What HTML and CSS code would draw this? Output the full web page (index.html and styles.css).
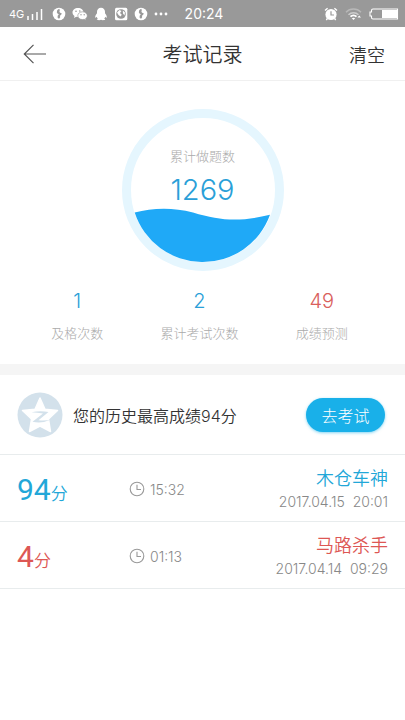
FILE: index.html
```
<!DOCTYPE html>
<html lang="zh-CN">
<head>
<meta charset="utf-8">
<meta name="viewport" content="width=device-width, initial-scale=1">
<title>考试记录</title>
<link rel="stylesheet" href="styles.css">
</head>
<body>
<svg class="defs" aria-hidden="true">
  <symbol id="globe" viewBox="0 0 14 14">
    <circle cx="7" cy="7" r="6.3" fill="#fff"/>
    <path d="M7.200 1.800Q4.600 2.600 4.800 5.200Q5.200 6.600 6.800 7.200Q5.200 8.600 5.600 10.400Q6 11.800 7.400 11.400Q8.600 10.600 8 8.800Q9.800 7.800 9.800 6Q9.200 6.400 8.200 5.800Q7 5.200 7.600 4Q8.200 3 7.200 1.800Z" fill="#999"/>
  </symbol>
  <symbol id="clock" viewBox="0 0 16 16">
    <circle cx="8" cy="8" r="6.8" fill="none" stroke="#999" stroke-width="1.1"/>
    <path d="M8 3.8V8.5H12" fill="none" stroke="#999" stroke-width="1.1"/>
  </symbol>
</svg>

<div class="status">
  <div class="status-left">
    <span class="network">4G</span>
    <svg class="signal" width="16" height="12" viewBox="0 0 16 12"><path d="M1 8v4M5.500 6v6M10 4v8M14.500 1v11" stroke="#fff" stroke-width="1.500"/></svg>
    <svg width="14" height="14"><use href="#globe"/></svg>
    <svg width="16" height="14" viewBox="0 0 16 14">
      <path d="M6 1C2.800 1 .5 3 .5 5.500c0 1.500.8 2.700 2 3.500L2 11l2.200-1.200c.6.2 1.200.2 1.800.2C9.200 10 11.500 8 11.500 5.500S9.200 1 6 1Z" fill="#fff"/>
      <path d="M10.500 4.800C7.800 4.800 5.800 6.600 5.800 8.700s2 3.900 4.700 3.900c.6 0 1.200-.1 1.700-.3l1.900 1-.5-1.700c1-.7 1.700-1.700 1.700-2.900 0-2.100-2.100-3.900-4.800-3.900Z" fill="#fff" stroke="#999" stroke-width=".7"/>
      <g fill="#999"><circle cx="4" cy="4.200" r=".8"/><circle cx="7.800" cy="4" r=".8"/><circle cx="9" cy="7.700" r=".7"/><circle cx="12.200" cy="7.700" r=".7"/></g>
    </svg>
    <svg width="14" height="14" viewBox="0 0 14 14"><path d="M7 .7c-2.500 0-4 1.800-4 4.100v1.500C2 7.500 1 9 1.200 10.800c.6 0 1-.5 1.500-1 .2.800.6 1.400 1.100 1.900-.6.200-1 .5-1 .9 0 .7 3.400.9 4.200.2.800.7 4.200.5 4.200-.2 0-.4-.4-.7-1-.9.500-.5.9-1.100 1.100-1.900.5.500.9 1 1.500 1C13 9 12 7.500 11 6.300V4.800C11 2.500 9.500.7 7 .7Z" fill="#fff"/></svg>
    <svg width="14" height="14" viewBox="0 0 14 14"><rect x="1" y=".7" width="12.300" height="12.600" rx="1.500" fill="#fff"/><circle cx="7" cy="7" r="4.800" fill="#999"/><path d="M3 5.500 5.500 3 7.500 4 6 6 7.800 7.800 6.500 9.500 4.500 8ZM8.800 3.500 11 5.500 10.500 8.500 9 6.500Z" fill="#fff"/></svg>
    <svg width="14" height="14"><use href="#globe"/></svg>
    <svg width="14" height="14" viewBox="0 0 14 14"><g fill="#fff"><circle cx="2" cy="7" r="1.400"/><circle cx="7" cy="7" r="1.400"/><circle cx="12" cy="7" r="1.400"/></g></svg>
  </div>
  <time class="status-time">20:24</time>
  <div class="status-right">
    <svg width="14" height="14" viewBox="0 0 14 14"><circle cx="7" cy="7.500" r="5.600" fill="#fff"/><path d="M1 3.600 3.600 1.300M10.400 1.300 13 3.600M3.400 11.500 2.300 13M10.600 11.500 11.700 13" stroke="#fff" stroke-width="1.400"/><path d="M7 4.300V8H10" fill="none" stroke="#999" stroke-width="1.200"/></svg>
    <svg width="17" height="14" viewBox="0 0 17 14"><g fill="none"><path d="M1 5.200C5 .9 12 .9 16 5.200" stroke="#b8b8b8" stroke-width="1.400"/><path d="M3.500 7.800C6.300 4.900 10.700 4.900 13.500 7.800" stroke="#ccc" stroke-width="1.500"/><path d="M5.500 9.700C7.200 8 9.800 8 11.500 9.700" stroke="#fff" stroke-width="1.800"/></g><path d="M6.800 11.200 8.500 12.900 10.200 11.200Q8.500 10.200 6.800 11.200ZM12.500 10.500 14.200 8.500 16 10.500Z" fill="#fff"/></svg>
    <svg width="30" height="12" viewBox="0 0 30 12"><path d="M4 1H28.500V11H4Q2.500 11 2.500 9.500V8H1V4H2.500V2.500Q2.500 1 4 1Z" fill="none" stroke="#fff" stroke-width="1.100"/><path d="M13 2H28V10H13Z" fill="#fff"/></svg>
  </div>
</div>

<header class="bar">
  <button class="back" type="button" aria-label="返回"><svg width="24" height="20" viewBox="0 0 24 20"><path d="M23 10H1.500M10.500.8 1.300 10 10.500 19.200" fill="none" stroke="#555" stroke-width="1.200"/></svg></button>
  <h1>考试记录</h1>
  <button class="clear" type="button">清空</button>
</header>

<main>
  <section class="summary">
    <div class="gauge">
      <svg width="162" height="162" viewBox="0 0 162 162" aria-hidden="true">
        <circle cx="81" cy="81" r="76.500" fill="none" stroke="#e5f6fe" stroke-width="9"/>
        <path d="M12.700 103.500C30 99 50 98 71 103.500C99 112 118 113 148 105.800A71.500 71.500 0 0 1 12.700 103.500Z" fill="#1fa9f7"/>
      </svg>
      <div class="gauge-text">
        <span class="caption">累计做题数</span>
        <span class="total">1269</span>
      </div>
    </div>
    <dl class="stats">
      <div><dt>及格次数</dt><dd>1</dd></div>
      <div><dt>累计考试次数</dt><dd>2</dd></div>
      <div class="red"><dt>成绩预测</dt><dd>49</dd></div>
    </dl>
  </section>

  <section class="best">
    <svg width="46" height="46" viewBox="0 0 46 46" aria-hidden="true">
      <circle cx="23" cy="23" r="22.500" fill="#d3e1eb"/>
      <path d="M23 6 28 17.300 40.500 18.500 31.500 27 33.500 39.500 23 34 12.500 39.500 14.500 27 5.500 18.500 18 17.300Z" fill="#fff" stroke="#fff" stroke-width="1.500" stroke-linejoin="round"/>
      <path d="M14.500 20.300Q23 18.300 31.500 20L21.500 28.200Q28 29.200 34.500 27.300Q25 32 15.500 29.700L26 21.500Q20 20.500 14.500 20.300Z" fill="#d3e1eb"/>
    </svg>
    <p>您的历史最高成绩94分</p>
    <button class="go" type="button">去考试</button>
  </section>

  <ul class="records">
    <li>
      <div class="score"><strong>94</strong>分</div>
      <div class="spent"><svg width="16" height="16"><use href="#clock"/></svg><span>15:32</span></div>
      <div class="result"><b>木仓车神</b><time>2017.04.15&nbsp; 20:01</time></div>
    </li>
    <li class="red">
      <div class="score"><strong>4</strong>分</div>
      <div class="spent"><svg width="16" height="16"><use href="#clock"/></svg><span>01:13</span></div>
      <div class="result"><b>马路杀手</b><time>2017.04.14&nbsp; 09:29</time></div>
    </li>
  </ul>
</main>
</body>
</html>
```
FILE: styles.css
```
* { box-sizing: border-box; }

body {
  margin: 0;
  background: #fff;
  color: #333;
  font-family: Inter, "Noto Sans CJK SC", sans-serif;
  font-weight: 300;
}

h1, p, dl, dd, ul { margin: 0; padding: 0; }
svg { display: block; flex: none; }
.defs { position: absolute; width: 0; height: 0; }

button {
  border: 0;
  padding: 0;
  background: none;
  color: inherit;
  font: inherit;
}

.status {
  display: grid;
  grid-template-columns: 1fr auto 1fr;
  align-items: center;
  height: 27px;
  padding: 0 6px 0 9px;
  background: #999;
  color: #fff;
}

.status-left, .status-right { display: flex; align-items: center; }
.status-left { gap: 6px; }
.status-right { justify-content: flex-end; gap: 7px; }
.network { font-size: 11px; font-weight: 400; }
.signal { margin: 0 3px 0 -3px; }
.status-time { font-size: 14px; font-weight: 400; }

.bar {
  display: grid;
  grid-template-columns: 1fr auto 1fr;
  align-items: center;
  height: 54px;
  padding: 0 20px;
  border-bottom: 1px solid #f0f0f0;
}

.bar h1 { font-size: 20px; font-weight: 350; }
.back { justify-self: start; padding-left: 3px; }
.clear { justify-self: end; font-size: 18px; font-weight: 350; }

.summary {
  padding: 28px 0 21px;
  border-bottom: 11px solid #f5f5f5;
}

.gauge { display: grid; justify-items: center; }
.gauge > * { grid-area: 1 / 1; }

.gauge-text {
  display: flex;
  flex-direction: column;
  align-items: center;
  padding-top: 37px;
}

.caption {
  color: #aaa;
  font-size: 13px;
  line-height: 20px;
}

.total {
  color: #2a9fd8;
  font-size: 29px;
  line-height: 48px;
}

.stats {
  display: grid;
  grid-template-columns: repeat(3, 1fr);
  padding: 16px 22px 0 16px;
  text-align: center;
}

.stats div { display: flex; flex-direction: column-reverse; gap: 8px; }
.stats dt { color: #aaa; font-size: 13px; line-height: 20px; }
.stats dd { color: #2a9fd8; font-size: 20px; line-height: 28px; }
.stats .red dd { color: #d9605c; }

.best {
  display: flex;
  align-items: center;
  gap: 10px;
  height: 80px;
  padding: 0 20px 0 17px;
  border-bottom: 1px solid #e8eced;
}

.best p { flex: 1; font-size: 16px; font-weight: 350; }

.go {
  width: 79px;
  height: 34px;
  border-radius: 17px;
  background: #19b0e9;
  box-shadow: 0 1px 3px #19b0e988;
  color: #fff;
  font-size: 16px;
}

.records { list-style: none; }

.records li {
  display: grid;
  grid-template-columns: 112px 1fr auto;
  align-items: center;
  height: 67px;
  padding: 2px 17px 0;
  border-bottom: 1px solid #e8eced;
  color: #22a7d8;
}

.records .red { color: #dd5754; }

.score { font-size: 17px; font-weight: 350; }

.score strong {
  font-family: Roboto, sans-serif;
  font-size: 30px;
  font-weight: 400;
}

.spent {
  display: flex;
  align-items: center;
  gap: 5px;
  color: #888;
  font-size: 14px;
}

.result { display: flex; flex-direction: column; align-items: flex-end; }
.result b { font-size: 18px; font-weight: 350; line-height: 26px; }
.result time { color: #888; font-size: 14px; line-height: 20px; }
```
